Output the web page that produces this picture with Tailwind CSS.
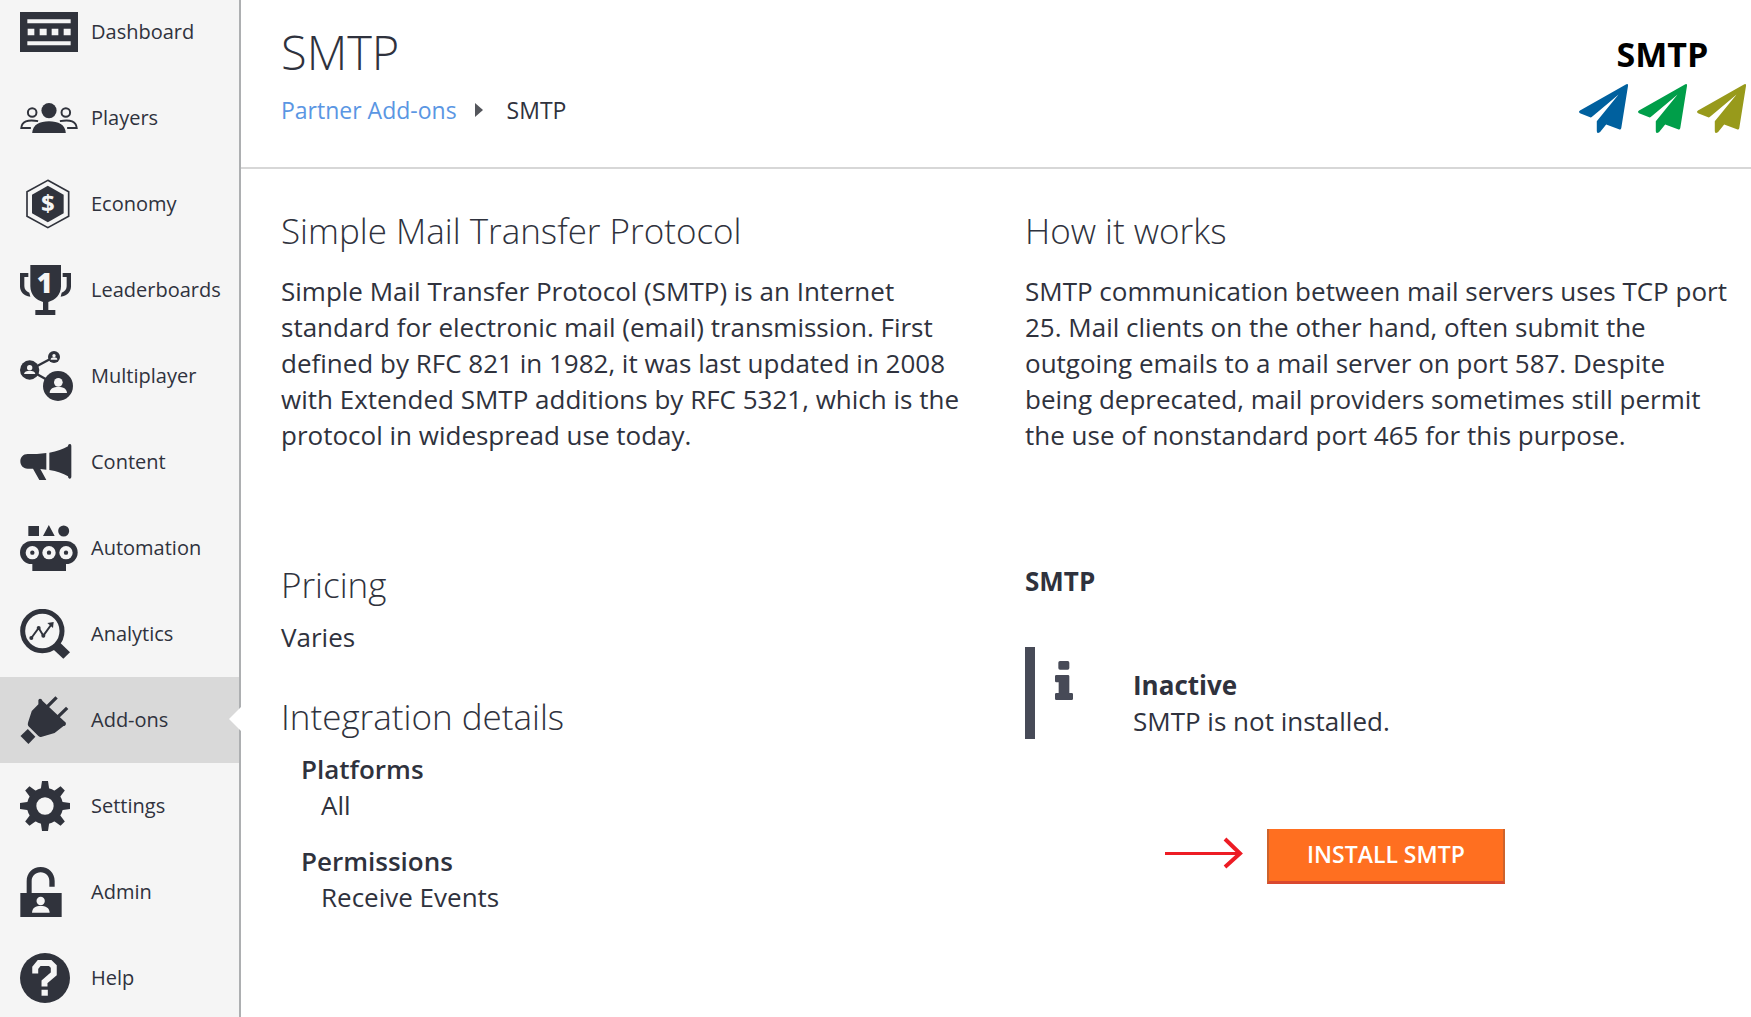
<!DOCTYPE html>
<html lang="en">
<head>
<meta charset="utf-8">
<meta name="viewport" content="width=device-width, initial-scale=1">
<title>SMTP - Partner Add-ons</title>
<script src="https://cdn.jsdelivr.net/npm/@tailwindcss/browser@4"></script>
</head>
<body class="flex h-screen overflow-hidden bg-white font-['Open_Sans',sans-serif] text-[#2f323d]">

<aside class="w-[241px] shrink-0 border-r-2 border-[#adafb1] bg-[#f5f5f5]">
  <nav aria-label="Main">
    <ul class="-mt-[11px] text-xl font-medium">
      <li><a href="#" class="flex h-[86px] items-center pl-5">
        <span class="w-[71px] shrink-0"><svg width="58" height="40" viewBox="60 38 174 120" fill="#30333c" aria-hidden="true"><path d="M60 38H234V158H60z"/><path fill="#f5f5f5" d="M82 60H212V72H82zM82 126H212V138H82zM83 88H103V108H83zM119 88H140V108H119zM155 88H175V108H155zM191 88H212V108H191z"/></svg></span>Dashboard</a></li>
      <li><a href="#" class="flex h-[86px] items-center pl-5">
        <span class="w-[71px] shrink-0"><svg width="58" height="30" viewBox="60 308 174 91" fill="#30333c" aria-hidden="true"><circle cx="147" cy="331" r="23"/><path d="M96 399C97 373 119 363 147 363S197 373 198 399z"/><g fill="none" stroke="#30333c" stroke-width="6"><circle cx="96" cy="337" r="13"/><circle cx="198" cy="337" r="13"/><path d="M92 384H63C64 364 82 357 114 363M202 384H231C230 364 212 357 180 363"/></g></svg></span>Players</a></li>
      <li><a href="#" class="flex h-[86px] items-center pl-5">
        <span class="w-[71px] shrink-0 pl-1.5"><svg width="44" height="50" viewBox="78 537 132 150" aria-hidden="true"><path d="M143.500 541L206 575V649L143.500 683L81 649V575z" fill="none" stroke="#30333c" stroke-width="5"/><path d="M143.500 557L191 584V640L143.500 667L96 640V584z" fill="#30333c"/><text x="143.500" y="637" text-anchor="middle" font-size="72" font-weight="700" font-family="Open Sans" fill="#f5f5f5">$</text></svg></span>Economy</a></li>
      <li><a href="#" class="flex h-[86px] items-center pl-5">
        <span class="w-[71px] shrink-0"><svg width="51" height="50" viewBox="59 42 153 150" fill="#30333c" aria-hidden="true"><path d="M90 42H182V106C182 132 164 148 144 153V177H165V192H105V177H128V153C108 148 90 132 90 106z"/><path d="M59 66H84V78H72V105C72 115 77 121 87 125L90 137C70 135 59 122 59 106zM212 66H187V78H199V105C199 115 194 121 184 125L181 137C201 135 212 122 212 106z"/><text x="133" y="125" text-anchor="middle" font-size="82" font-weight="800" font-family="Open Sans" fill="#f5f5f5">1</text></svg></span>Leaderboards</a></li>
      <li><a href="#" class="flex h-[86px] items-center pl-5">
        <span class="w-[71px] shrink-0"><svg width="53" height="50" viewBox="59 300 159 150" fill="#30333c" aria-hidden="true"><path d="M161 318L88 357L173 405" fill="none" stroke="#30333c" stroke-width="7"/><circle cx="161" cy="318" r="18"/><circle cx="88" cy="357" r="29"/><circle cx="173" cy="405" r="45"/><g fill="#f5f5f5"><circle cx="161" cy="314" r="5"/><path d="M151 326C151 321 156 319 161 319S171 321 171 326z"/><circle cx="88" cy="350" r="8"/><path d="M71 369C72 361 79 359 88 359S104 361 105 369z"/><circle cx="174" cy="394" r="13"/><path d="M148 426C148 413 159 408 174 408S199 413 200 426z"/></g></svg></span>Multiplayer</a></li>
      <li><a href="#" class="flex h-[86px] items-center pl-5">
        <span class="w-[71px] shrink-0"><svg width="52" height="36" viewBox="59 579 156 108" fill="#30333c" aria-hidden="true"><path d="M82 609H110L138 606V656L120 654L138 687H117L98 653H82C68 653 60 643 60 631S68 609 82 609z"/><path d="M147 605C170 601 188 595 203 586C203 577 213 577 213 585V677C213 685 203 685 203 676C188 667 170 660 147 657z"/></svg></span>Content</a></li>
      <li><a href="#" class="flex h-[86px] items-center pl-5">
        <span class="w-[71px] shrink-0"><svg width="58" height="46" viewBox="59 42 174 138" fill="#30333c" aria-hidden="true"><path d="M84 45H116V75H84zM128 75L145.500 42L163 75z"/><circle cx="190" cy="60" r="16.500"/><rect x="59" y="90" width="173" height="69" rx="34.500"/><path d="M96 150H197V180H96z"/><g fill="#f5f5f5"><circle cx="96" cy="125" r="20"/><circle cx="146" cy="125" r="20"/><circle cx="197" cy="125" r="20"/></g><circle cx="96" cy="125" r="6.500"/><circle cx="146" cy="125" r="6.500"/><circle cx="197" cy="125" r="6.500"/></svg></span>Automation</a></li>
      <li><a href="#" class="flex h-[86px] items-center pl-5">
        <span class="w-[71px] shrink-0"><svg width="50" height="50" viewBox="59 294 150 150" fill="#30333c" aria-hidden="true"><circle cx="126" cy="360" r="59" fill="none" stroke="#30333c" stroke-width="15"/><path d="M160 405L174 390L209 424L189 443L160 416z"/><path d="M93 381L115 351L129 374L152 342" fill="none" stroke="#30333c" stroke-width="6"/><circle cx="93" cy="381" r="6"/><circle cx="115" cy="351" r="6"/><circle cx="129" cy="374" r="6"/><path d="M141 336L160 333L158 351z"/></svg></span>Analytics</a></li>
      <li class="relative bg-[#d9d9d9]"><a href="#" aria-current="page" class="flex h-[86px] items-center pl-5">
        <span class="w-[71px] shrink-0"><svg width="49" height="48" viewBox="59 550 147 145" fill="#30333c" aria-hidden="true"><path d="M114 562C118 556 124 559 126 564L193 627C200 631 198 641 190 641L163 662L122 674C117 675 114 671 111 668L85 642C81 637 82 634 83 629L94 595L114 575z"/><path d="M60 671L82 650L105 673L84 695z"/><path d="M141 582L169 554M173 613L201 586" stroke="#30333c" stroke-width="10"/></svg></span>Add-ons</a>
        <svg class="absolute -right-0.5 top-[30px]" width="12" height="24" viewBox="0 0 12 24" fill="#fff" aria-hidden="true"><path d="M12 0V24L0 12z"/></svg></li>
      <li><a href="#" class="flex h-[86px] items-center pl-5">
        <span class="w-[71px] shrink-0"><svg width="50" height="50" viewBox="-75 -75 150 150" fill="#30333c" aria-hidden="true"><defs><path id="tooth" d="M-13 -48L-9 -75H9L13 -48z"/></defs><circle r="40" fill="none" stroke="#30333c" stroke-width="28"/><use href="#tooth"/><use href="#tooth" transform="rotate(45)"/><use href="#tooth" transform="rotate(90)"/><use href="#tooth" transform="rotate(135)"/><use href="#tooth" transform="rotate(180)"/><use href="#tooth" transform="rotate(225)"/><use href="#tooth" transform="rotate(270)"/><use href="#tooth" transform="rotate(315)"/></svg></span>Settings</a></li>
      <li><a href="#" class="flex h-[86px] items-center pl-5">
        <span class="w-[71px] shrink-0"><svg width="42" height="50" viewBox="59 324 126 150" fill="#30333c" aria-hidden="true"><path d="M60 402H79V366C79 342 97 324 121 324S163 342 163 366V383H147V366C147 351 136 340 121 340S94 351 94 366V402H184V474H60z"/><g fill="#f5f5f5"><circle cx="121" cy="426" r="12.500"/><path d="M95 461C96 446 106 441 121 441S147 446 148 461z"/></g></svg></span>Admin</a></li>
      <li><a href="#" class="flex h-[86px] items-center pl-5">
        <span class="w-[71px] shrink-0"><svg width="50" height="50" viewBox="59 582 151 151" aria-hidden="true"><circle cx="134.500" cy="657.500" r="75.500" fill="#30333c"/><path d="M105 644V627L117 612H150L161 623V645L133 669V683" fill="none" stroke="#f5f5f5" stroke-width="18"/><path fill="#f5f5f5" d="M124 693H143V711H124z"/></svg></span>Help</a></li>
    </ul>
  </nav>
</aside>

<main class="min-w-0 flex-1">
  <header class="flex items-start justify-between border-b-2 border-[#d7d7d7] pt-7 pr-[5px] pb-[34px] pl-10">
    <div>
      <h1 class="text-[47px] leading-12 font-light">SMTP</h1>
      <nav aria-label="Breadcrumb" class="mt-[18px] flex items-center text-[23px] leading-8">
        <a href="#" class="text-[#5a96e3]">Partner Add-ons</a>
        <svg class="mr-6 ml-[18px]" width="8" height="14" viewBox="0 0 8 14" fill="#54565c" aria-hidden="true"><path d="M0 0L8 7L0 14z"/></svg>
        <span>SMTP</span>
      </nav>
    </div>
    <div class="flex flex-col items-center pt-1.5">
      <div class="text-[34px] leading-10 font-bold text-black">SMTP</div>
      <div class="mt-2.5 flex gap-2.5">
        <svg width="49" height="49" viewBox="85 252 146 146" fill="#00609e" aria-hidden="true"><path d="M226 253Q232 250 231 258L211 383Q210 389 204 387L166 373L148 395Q138 402 138 392V363L203 283L123 350L120 352L88 339Q82 335 88 331z"/></svg>
        <svg width="49" height="49" viewBox="85 252 146 146" fill="#009e49" aria-hidden="true"><path d="M226 253Q232 250 231 258L211 383Q210 389 204 387L166 373L148 395Q138 402 138 392V363L203 283L123 350L120 352L88 339Q82 335 88 331z"/></svg>
        <svg width="49" height="49" viewBox="85 252 146 146" fill="#989a1b" aria-hidden="true"><path d="M226 253Q232 250 231 258L211 383Q210 389 204 387L166 373L148 395Q138 402 138 392V363L203 283L123 350L120 352L88 339Q82 335 88 331z"/></svg>
      </div>
    </div>
  </header>

  <div class="grid grid-cols-2 gap-x-6 pt-10 pr-1.5 pl-10 text-[26px] leading-9">
    <section>
      <h2 class="text-[35px] leading-11 font-light">Simple Mail Transfer Protocol</h2>
      <p class="mt-5 pr-2">Simple Mail Transfer Protocol (SMTP) is an Internet standard for electronic mail (email) transmission. First defined by RFC 821 in 1982, it was last updated in 2008 with Extended SMTP additions by RFC 5321, which is the protocol in widespread use today.</p>
    </section>
    <section>
      <h2 class="text-[35px] leading-11 font-light">How it works</h2>
      <p class="mt-5 pr-2">SMTP communication between mail servers uses TCP port 25. Mail clients on the other hand, often submit the outgoing emails to a mail server on port 587. Despite being deprecated, mail providers sometimes still permit the use of nonstandard port 465 for this purpose.</p>
    </section>

    <section class="mt-[110px]">
      <h2 class="text-[35px] leading-11 font-light">Pricing</h2>
      <p class="mt-3">Varies</p>
      <h2 class="mt-10 text-[35px] leading-11 font-light">Integration details</h2>
      <dl class="mt-3 pl-5">
        <dt class="font-semibold">Platforms</dt>
        <dd class="pl-5">All</dd>
        <dt class="mt-5 font-semibold">Permissions</dt>
        <dd class="pl-5">Receive Events</dd>
      </dl>
    </section>
    <section class="mt-[110px]">
      <h3 class="font-bold">SMTP</h3>
      <div class="mt-12 flex items-start border-l-10 border-[#474a57] pt-5 pl-5">
        <svg class="-mt-1.5 shrink-0" width="18" height="39" viewBox="135 363 54 117" fill="#474a57" aria-hidden="true"><rect x="145" y="363" width="33" height="26" rx="5"/><path d="M139 405H174Q178 405 178 409V459H185Q189 459 189 463V476Q189 480 185 480H139Q135 480 135 476V463Q135 459 139 459H146V427H139Q135 427 135 423V409Q135 405 139 405z"/></svg>
        <div class="ml-15">
          <p class="font-bold">Inactive</p>
          <p>SMTP is not installed.</p>
        </div>
      </div>
      <div class="mt-[90px] flex items-start gap-6 pl-35">
        <svg class="mt-2 shrink-0" width="78" height="32" viewBox="0 0 78 32" fill="none" stroke="#ed1c24" aria-hidden="true"><path d="M0 16.500H76" stroke-width="3"/><path d="M60 2L75 16.500L60 30" stroke-width="4"/></svg>
        <button type="button" class="h-[55px] cursor-pointer border-x-2 border-b-3 border-x-[#cd632c] border-b-[#d9482f] bg-[#ff6f20] px-[38px] pb-0.5 text-[23px] leading-8 font-semibold text-white">INSTALL SMTP</button>
      </div>
    </section>
  </div>
</main>
</body>
</html>
